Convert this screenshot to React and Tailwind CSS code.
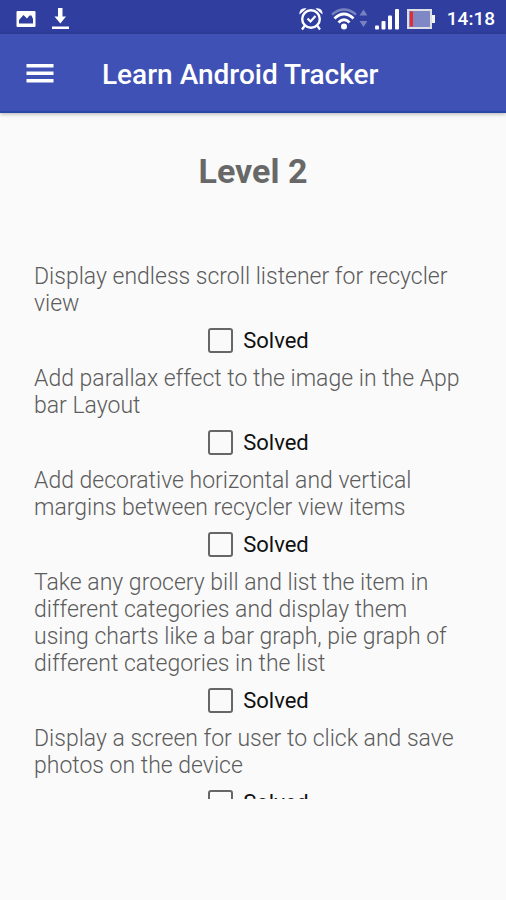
const tasks = [
  'Display endless scroll listener for recycler view',
  'Add parallax effect to the image in the App bar Layout',
  'Add decorative horizontal and vertical margins between recycler view items',
  'Take any grocery bill and list the item in different categories and display them using charts like a bar graph, pie graph of different categories in the list',
  'Display a screen for user to click and save photos on the device',
];

function StatusBar() {
  return (
    <div className="flex h-[34px] shrink-0 items-center bg-[#303f9f] pt-1 pr-[11px] pl-4 text-white">
      <svg width="20" height="16" viewBox="0 0 20 16" aria-hidden="true">
        <path fill="currentColor" fillRule="evenodd" d="M1.500 0h17a1 1 0 0 1 1 1v14a1 1 0 0 1-1 1h-17a1 1 0 0 1-1-1V1a1 1 0 0 1 1-1zM3 12.500h14V8l-1.500-3.500h-2L11 7.500 7.500 4 3 9z" />
      </svg>
      <svg className="ml-4" width="17" height="22" viewBox="0 0 17 22" aria-hidden="true">
        <path fill="currentColor" d="M6 0h4.500v8.500H14L8.300 15.500 2.500 8.500H6zM0 18.500h17V21H0z" />
      </svg>
      <div className="ml-auto flex items-center">
        <svg width="24" height="24" viewBox="0 0 24 24" fill="none" stroke="currentColor" aria-hidden="true">
          <circle cx="12" cy="12" r="8.800" strokeWidth="2.400" />
          <path strokeWidth="2.200" d="M8.500 11.500l3 3 5-5.500M5.500 19L3 22.500M18.500 19l2.500 3.500" />
          <path fill="currentColor" stroke="none" d="M.5 7.500C0 3.500 3 .3 7.500 1.500zM23.500 7.500C24 3.500 21 .3 16.500 1.500z" />
        </svg>
        <svg className="ml-2" width="36" height="24" viewBox="0 0 36 24" fill="none" stroke="currentColor" aria-hidden="true">
          <path strokeWidth="2.400" opacity=".35" d="M1 7.500Q13 -2.500 25 7.500" />
          <path strokeWidth="2.800" d="M3.500 11.500Q13 2.500 22.500 11.500M7.500 15.500Q13 10 18.500 15.500" />
          <circle cx="13" cy="19.500" r="3" fill="currentColor" stroke="none" />
          <path fill="currentColor" stroke="none" opacity=".35" d="M28.500 8.500l4-6 4 6zM28.500 14l4 6 4-6z" />
        </svg>
        <svg className="ml-2" width="24" height="24" viewBox="0 0 24 24" fill="currentColor" aria-hidden="true">
          <rect x="0" y="18.500" width="4" height="4" rx="1" />
          <rect x="6.500" y="14" width="4" height="8.500" rx="1" />
          <rect x="13" y="8.500" width="4" height="14" rx="1" />
          <rect x="20" y="2" width="4" height="20.500" rx="1" />
        </svg>
        <svg className="ml-2" width="28" height="20" viewBox="0 0 28 20" aria-hidden="true">
          <rect x="1" y="1" width="23" height="18" fill="#7f88c4" stroke="#dedfe5" strokeWidth="2" />
          <path fill="#f5f5f5" d="M25 6h3v8h-3z" />
          <path fill="#e42b30" d="M3 2.500h3v15H3z" />
        </svg>
        <span className="ml-3 text-[19px] leading-6 font-medium">14:18</span>
      </div>
    </div>
  );
}

export default function App() {
  return (
    <div className="flex h-screen flex-col bg-[#fafafa] font-['Roboto','Liberation_Sans',sans-serif]">
      <StatusBar />
      <header className="flex h-[79px] shrink-0 items-center border-b-2 border-[#2947a6] bg-[#3f51b5] pt-1 pl-[26px] text-white shadow-[0_1px_4px_rgba(0,0,0,0.3)]">
        <button type="button" aria-label="Open menu">
          <svg width="28" height="24" viewBox="0 0 28 24" fill="currentColor" aria-hidden="true">
            <path d="M.5 1h27v3.500H.5zM.5 8.500h27V12H.5zM.5 16h27v3.500H.5z" />
          </svg>
        </button>
        <h1 className="ml-12 text-[28px] leading-8 font-medium">Learn Android Tracker</h1>
      </header>
      <main className="flex min-h-0 flex-1 flex-col px-[34px] pt-[38px] pb-[101px]">
        <h2 className="text-center text-[34px] leading-10 font-bold text-[#686868]">Level 2</h2>
        <ul className="mt-[72px] min-h-0 flex-1 overflow-hidden">
          {tasks.map((task) => (
            <li key={task}>
              <p className="pr-2 text-[23px] leading-[27px] font-[350] text-[#5c5c5c]">{task}</p>
              <div className="flex h-12 items-center justify-center pb-0.5 pl-[11px]">
                <label className="flex items-center gap-2.5 text-[22px] leading-[27px] text-[#101010]">
                  <input type="checkbox" className="size-[25px] appearance-none rounded-[3px] border-2 border-[#666666] checked:bg-[#3f51b5]" />
                  Solved
                </label>
              </div>
            </li>
          ))}
        </ul>
      </main>
    </div>
  );
}
